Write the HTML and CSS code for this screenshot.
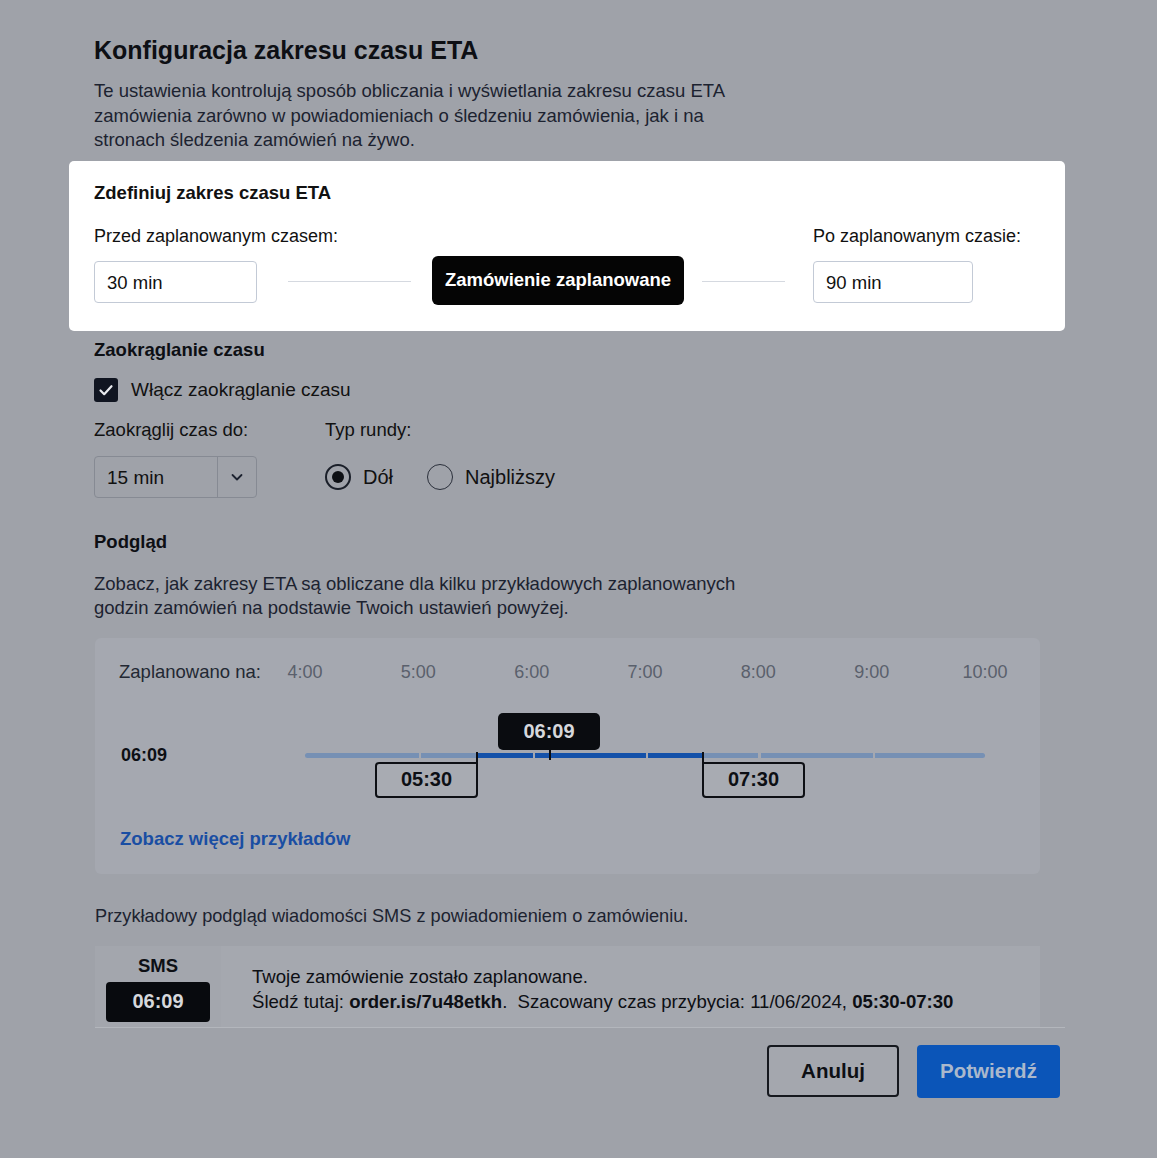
FILE: index.html
```html
<!DOCTYPE html>
<html lang="pl">
<head>
<meta charset="utf-8">
<title>Konfiguracja zakresu czasu ETA</title>
<link rel="stylesheet" href="styles.css">
</head>
<body>
<div class="modal">
  <h1 class="title">Konfiguracja zakresu czasu ETA</h1>
  <p class="intro">Te ustawienia kontrolują sposób obliczania i wyświetlania zakresu czasu ETA zamówienia zarówno w powiadomieniach o śledzeniu zamówienia, jak i na stronach śledzenia zamówień na żywo.</p>

  <section class="card">
    <h2 class="card-title">Zdefiniuj zakres czasu ETA</h2>
    <div class="range-row">
      <div class="field field-left">
        <label class="label">Przed zaplanowanym czasem:</label>
        <div class="input">30 min</div>
      </div>
      <div class="connector">
        <span class="line line-left"></span>
        <span class="scheduled">Zamówienie zaplanowane</span>
        <span class="line line-right"></span>
      </div>
      <div class="field field-right">
        <label class="label">Po zaplanowanym czasie:</label>
        <div class="input input-right">90 min</div>
      </div>
    </div>
  </section>

  <h2 class="section-title rounding-title">Zaokrąglanie czasu</h2>
  <div class="check-row">
    <span class="checkbox">
      <svg viewBox="0 0 24 24" width="24" height="24"><path d="M6.5 12.5l3.7 3.7 7.3-8" fill="none" stroke="#e8eaee" stroke-width="2.2" stroke-linecap="round" stroke-linejoin="round"/></svg>
    </span>
    <span class="check-label">Włącz zaokrąglanie czasu</span>
  </div>
  <div class="round-row">
    <div class="round-col">
      <div class="label-gray">Zaokrąglij czas do:</div>
      <div class="select">
        <span class="select-value">15 min</span>
        <span class="select-arrow">
          <svg viewBox="0 0 16 16" width="16" height="16"><path d="M3.5 6l4.5 4.5L12.5 6" fill="none" stroke="#1c2230" stroke-width="1.8" stroke-linecap="round" stroke-linejoin="round"/></svg>
        </span>
      </div>
    </div>
    <div class="type-col">
      <div class="label-gray">Typ rundy:</div>
      <div class="radios">
        <span class="radio checked"><span class="dot"></span></span>
        <span class="radio-label">Dół</span>
        <span class="radio"></span>
        <span class="radio-label">Najbliższy</span>
      </div>
    </div>
  </div>

  <h2 class="section-title preview-title">Podgląd</h2>
  <p class="preview-desc">Zobacz, jak zakresy ETA są obliczane dla kilku przykładowych zaplanowanych<br>godzin zamówień na podstawie Twoich ustawień powyżej.</p>

  <div class="preview">
    <div class="axis-row">
      <span class="axis-label">Zaplanowano na:</span>
      <div class="axis">
        <span class="hour" style="left:0%">4:00</span>
        <span class="hour" style="left:16.667%">5:00</span>
        <span class="hour" style="left:33.333%">6:00</span>
        <span class="hour" style="left:50%">7:00</span>
        <span class="hour" style="left:66.667%">8:00</span>
        <span class="hour" style="left:83.333%">9:00</span>
        <span class="hour" style="left:100%">10:00</span>
      </div>
    </div>
    <div class="example-row">
      <span class="example-label">06:09</span>
      <div class="chart">
        <span class="seg light first" style="left:0px;width:114px"></span>
        <span class="seg light" style="left:116px;width:56px"></span>
        <span class="seg dark" style="left:172px;width:56px"></span>
        <span class="seg dark" style="left:230px;width:111px"></span>
        <span class="seg dark" style="left:343px;width:55px"></span>
        <span class="seg light" style="left:398px;width:55px"></span>
        <span class="seg light" style="left:456px;width:112px"></span>
        <span class="seg light last" style="left:570px;width:110px"></span>

        <span class="callout">06:09</span>
        <span class="tick tick-now" style="left:244px"></span>

        <span class="bound bound-start" style="left:70px">05:30</span>
        <span class="bound bound-end" style="left:397px">07:30</span>
      </div>
    </div>
    <a class="more-link" href="#">Zobacz więcej przykładów</a>
  </div>

  <p class="sms-desc">Przykładowy podgląd wiadomości SMS z powiadomieniem o zamówieniu.</p>
  <div class="sms">
    <div class="sms-side">
      <span class="sms-tag">SMS</span>
      <span class="sms-time">06:09</span>
    </div>
    <div class="sms-body">
      <div>Twoje zamówienie zostało zaplanowane.</div>
      <div>Śledź tutaj: <b>order.is/7u48etkh</b>.&nbsp; Szacowany czas przybycia: 11/06/2024, <b>05:30-07:30</b></div>
    </div>
  </div>

  <div class="footer">
    <button class="btn btn-cancel">Anuluj</button>
    <button class="btn btn-confirm">Potwierdź</button>
  </div>
</div>
</body>
</html>
```
FILE: styles.css
```css
html, body {
  margin: 0;
  padding: 0;
  background: #9fa2a9;
}
body {
  font-family: "Liberation Sans", Arial, Helvetica, sans-serif;
  color: #1c2230;
  width: 1157px;
  height: 1158px;
  overflow: hidden;
}
.modal {
  padding: 35px 0 0 94px;
  width: 946px;
}
.title {
  margin: 0;
  font-size: 25px;
  line-height: 30px;
  font-weight: 700;
  color: #0d0f14;
}
.intro {
  margin: 14px 0 0;
  width: 660px;
  font-size: 18.5px;
  line-height: 24.5px;
  color: #1c2230;
}
.card {
  margin: 8px -25px 0;
  padding: 20px 25px 28px;
  background: #ffffff;
  border-radius: 5px;
}
.card-title {
  margin: 0;
  font-size: 18.5px;
  line-height: 24px;
  font-weight: 700;
  color: #111;
}
.range-row {
  display: flex;
  align-items: flex-end;
  margin-top: 19px;
}
.field {
  display: flex;
  flex-direction: column;
}
.field-left { width: 163px; }
.field-right { width: 205px; }
.label {
  font-size: 18px;
  line-height: 24px;
  color: #111;
  white-space: nowrap;
}
.input {
  margin-top: 13px;
  box-sizing: border-box;
  height: 42px;
  width: 163px;
  border: 1.5px solid #c3cad6;
  border-radius: 4px;
  padding: 0 12px;
  font-size: 18.5px;
  line-height: 42px;
  color: #111;
  background: #fff;
}
.input-right { width: 160px; }
.connector {
  width: 556px;
  height: 42px;
  display: flex;
  align-items: center;
}
.line {
  height: 1.5px;
  background: #d5d9e0;
}
.line-left { margin-left: 31px; width: 123px; margin-right: 21px; }
.line-right { margin-left: 18px; width: 83px; margin-right: 28px; }
.scheduled {
  box-sizing: border-box;
  width: 252px;
  height: 49px;
  margin-top: -3px;
  background: #050505;
  color: #fff;
  border-radius: 6px;
  font-size: 18.5px;
  font-weight: 700;
  display: flex;
  align-items: center;
  justify-content: center;
  white-space: nowrap;
}
.section-title {
  margin: 0;
  font-size: 18.5px;
  line-height: 24px;
  font-weight: 700;
  color: #0d0f14;
}
.rounding-title { margin-top: 7px; }
.check-row {
  display: flex;
  align-items: center;
  margin-top: 16px;
  height: 24px;
}
.checkbox {
  width: 24px;
  height: 24px;
  border-radius: 3px;
  background: #101521;
  display: flex;
}
.check-label {
  margin-left: 13px;
  font-size: 19px;
  line-height: 24px;
  color: #111;
}
.round-row {
  display: flex;
  margin-top: 16px;
}
.round-col { width: 163px; }
.type-col { margin-left: 68px; }
.label-gray {
  font-size: 18.5px;
  line-height: 24px;
  color: #111;
}
.select {
  margin-top: 14px;
  box-sizing: border-box;
  width: 163px;
  height: 42px;
  border: 1.5px solid #868a93;
  border-radius: 4px;
  display: flex;
  align-items: stretch;
}
.select-value {
  flex: 1;
  padding-left: 12px;
  font-size: 19px;
  line-height: 40px;
  padding-top: 1px;
  color: #111;
  border-right: 1.5px solid #868a93;
}
.select-arrow {
  width: 38px;
  display: flex;
  align-items: center;
  justify-content: center;
}
.radios {
  margin-top: 14px;
  height: 42px;
  display: flex;
  align-items: center;
}
.radio {
  box-sizing: border-box;
  width: 26px;
  height: 26px;
  border-radius: 50%;
  border: 1.5px solid #2a2f3a;
  display: flex;
  align-items: center;
  justify-content: center;
}
.radio.checked { border-width: 2px; border-color: #1a1f29; }
.dot {
  width: 12px;
  height: 12px;
  border-radius: 50%;
  background: #0d0f14;
}
.radio-label {
  margin-left: 12px;
  margin-right: 34px;
  font-size: 20px;
  line-height: 24px;
  color: #111;
}
.preview-title { margin-top: 32px; }
.preview-desc {
  margin: 18px 0 0;
  font-size: 18.5px;
  line-height: 24px;
  color: #1c2230;
}
.preview {
  margin-top: 18px;
  margin-left: 1px;
  width: 945px;
  box-sizing: border-box;
  background: #a5a8b0;
  border-radius: 6px;
  padding: 22px 24px 23px;
}
.axis-row {
  display: flex;
  height: 24px;
  align-items: center;
}
.axis-label {
  width: 186px;
  font-size: 18.5px;
  line-height: 24px;
  color: #232833;
  white-space: nowrap;
}
.axis {
  position: relative;
  width: 680px;
  height: 24px;
}
.hour {
  position: absolute;
  top: 0;
  transform: translateX(-50%);
  font-size: 18px;
  line-height: 24px;
  color: #5a606c;
}
.example-row {
  display: flex;
  margin-top: 16px;
  height: 100px;
}
.example-label {
  width: 186px;
  margin-top: 43px;
  padding-left: 2px;
  box-sizing: border-box;
  font-size: 18px;
  line-height: 24px;
  font-weight: 700;
  color: #0d0f14;
  height: 24px;
}
.chart {
  position: relative;
  width: 680px;
  height: 100px;
}
.seg {
  position: absolute;
  top: 53px;
  height: 5px;
}
.seg.light { background: #7690b4; }
.seg.dark { background: #1451a9; }
.seg.first { border-radius: 3px 0 0 3px; }
.seg.last { border-radius: 0 3px 3px 0; }
.callout {
  position: absolute;
  left: 193px;
  top: 13px;
  width: 102px;
  height: 37px;
  background: #0a0c10;
  border-radius: 5px;
  color: #d6d8dc;
  font-size: 20px;
  font-weight: 700;
  display: flex;
  align-items: center;
  justify-content: center;
}
.tick {
  position: absolute;
  width: 2px;
  background: #0a0c10;
}
.tick-now { top: 50px; height: 10px; }
.bound {
  position: absolute;
  top: 62px;
  box-sizing: border-box;
  width: 103px;
  height: 36px;
  border: 2px solid #0d0f14;
  border-radius: 4px;
  font-size: 20px;
  font-weight: 700;
  color: #0d0f14;
  display: flex;
  align-items: center;
  justify-content: center;
  background: #a8abb2;
}
.bound-start { border-top-right-radius: 0; }
.bound-end { border-top-left-radius: 0; }
.bound-start::after,
.bound-end::after {
  content: "";
  position: absolute;
  top: -12px;
  width: 2px;
  height: 12px;
  background: #0d0f14;
}
.bound-start::after { right: -2px; }
.bound-end::after { left: -2px; }
.more-link {
  display: block;
  margin-top: 27px;
  margin-left: 1px;
  font-size: 18.5px;
  line-height: 24px;
  font-weight: 700;
  color: #1a4ea3;
  text-decoration: none;
}
.sms-desc {
  margin: 30px 0 0 1px;
  font-size: 18.2px;
  line-height: 24px;
  color: #1c2230;
}
.sms {
  margin-top: 18px;
  margin-left: 1px;
  margin-right: -25px;
  height: 82px;
  display: flex;
  border-bottom: 1px solid #b3b6bc;
  box-sizing: border-box;
}
.sms-side {
  width: 126px;
  background: #a3a6ad;
  display: flex;
  flex-direction: column;
  align-items: center;
}
.sms-tag {
  margin-top: 8px;
  font-size: 18.5px;
  line-height: 24px;
  font-weight: 700;
  color: #0d0f14;
}
.sms-time {
  margin-top: 4px;
  width: 104px;
  height: 40px;
  background: #080a0e;
  border-radius: 4px;
  color: #d6d8dc;
  font-size: 20px;
  font-weight: 700;
  display: flex;
  align-items: center;
  justify-content: center;
}
.sms-body {
  width: 819px;
  background: #a5a8af;
  padding-left: 31px;
  padding-top: 5px;
  box-sizing: border-box;
  display: flex;
  flex-direction: column;
  justify-content: center;
  font-size: 18.6px;
  line-height: 25px;
  color: #0d0f14;
  white-space: nowrap;
}
.sms-body b { font-weight: 700; }
.footer {
  margin-top: 17px;
  margin-right: -20px;
  display: flex;
  justify-content: flex-end;
  gap: 18px;
}
.btn {
  font-family: "Liberation Sans", Arial, Helvetica, sans-serif;
  font-size: 20.5px;
  font-weight: 700;
  height: 52px;
  border-radius: 4px;
  cursor: pointer;
}
.btn-cancel {
  width: 132px;
  background: #a4a7ae;
  border: 2px solid #15181e;
  color: #0d0f14;
}
.btn-confirm {
  width: 143px;
  height: 53px;
  background: #0b55b8;
  border: none;
  color: #aab8cc;
}
```
